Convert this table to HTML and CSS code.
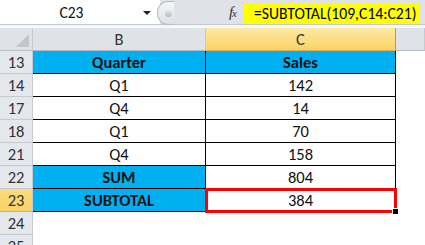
FILE: index.html
```html
<!DOCTYPE html>
<html lang="en">
<head>
    <meta charset="UTF-8">
    <meta name="viewport" content="width=device-width, initial-scale=1.0">
    <title>SUBTOTAL example</title>
    <link rel="stylesheet" href="styles.css">
</head>
<body>
    <div class="formula-bar">
        <div class="name-box">
            <span class="cell-ref">C23</span>
            <span class="drop"></span>
        </div>
        <div class="splitter"><span class="knob"></span></div>
        <div class="fx">f<span class="x">x</span></div>
        <div class="formula">=SUBTOTAL(109,C14:C21)</div>
    </div>

    <div class="grid">
        <div class="corner"><span class="tri"></span></div>
        <div class="col-head">B</div>
        <div class="col-head active">C</div>
        <div class="col-head"></div>

        <div class="row-head">13</div>
        <div class="cell blue bold">Quarter</div>
        <div class="cell blue bold">Sales</div>
        <div class="empty"></div>

        <div class="row-head">14</div>
        <div class="cell">Q1</div>
        <div class="cell">142</div>
        <div class="empty"></div>

        <div class="row-head">17</div>
        <div class="cell">Q4</div>
        <div class="cell">14</div>
        <div class="empty"></div>

        <div class="row-head">18</div>
        <div class="cell">Q1</div>
        <div class="cell">70</div>
        <div class="empty"></div>

        <div class="row-head">21</div>
        <div class="cell">Q4</div>
        <div class="cell">158</div>
        <div class="empty"></div>

        <div class="row-head">22</div>
        <div class="cell blue bold">SUM</div>
        <div class="cell">804</div>
        <div class="empty"></div>

        <div class="row-head active">23</div>
        <div class="cell blue bold">SUBTOTAL</div>
        <div class="cell selected">384</div>
        <div class="empty"></div>

        <div class="row-head">24</div>
        <div class="empty"></div>
        <div class="empty"></div>
        <div class="empty"></div>

        <div class="row-head">25</div>
        <div class="empty"></div>
        <div class="empty"></div>
        <div class="empty"></div>
    </div>
</body>
</html>
```

FILE: styles.css
```css
body {
    margin: 0;
    background-color: #ffffff;
    font-family: Carlito, Lato, "Liberation Sans", sans-serif;
    font-size: 16.5px;
    color: #111;
    width: 425px;
    height: 245px;
    overflow: hidden;
}

/* name box + formula input */
.formula-bar {
    display: flex;
    height: 24px;
    background-color: #dfe3e8;
    border-bottom: 1px solid #c3c8cf;
    box-shadow: 0 2px 0 #f4f5f7;
    margin-bottom: 3px;
}

.name-box {
    width: 160px;
    background-color: #ffffff;
    display: flex;
    align-items: center;
}

.cell-ref {
    width: 143px;
    text-align: center;
    font-size: 15.5px;
}

.drop {
    width: 0;
    height: 0;
    border-left: 4px solid transparent;
    border-right: 4px solid transparent;
    border-top: 4px solid #222;
    margin-top: 2px;
}

.splitter {
    width: 16px;
    height: 22px;
    margin-top: 1px;
    margin-left: -3px;
    border-radius: 11px 0 0 11px;
    border: 1px solid #b9bec5;
    border-right: none;
    background: linear-gradient(#f4f5f7, #dde1e6);
    display: flex;
    align-items: center;
    justify-content: center;
}

.knob {
    width: 7px;
    height: 7px;
    border-radius: 50%;
    background: linear-gradient(#e8eaed, #b4b9c0);
    margin-left: 4px;
}

.fx {
    width: 70px;
    text-align: right;
    padding-right: 7px;
    box-sizing: border-box;
    font-family: "Liberation Serif", serif;
    font-style: italic;
    font-size: 15px;
    line-height: 24px;
    color: #333;
}

.fx .x {
    font-size: 11px;
    margin-left: -1px;
}

.formula {
    width: 176px;
    margin-top: 4px;
    height: 20px;
    line-height: 20px;
    background-color: #ffff00;
    padding-left: 10px;
    box-sizing: border-box;
    white-space: nowrap;
    font-size: 15.7px;
    color: #000;
}

/* worksheet */
.grid {
    display: grid;
    grid-template-columns: 33px 173px 190px 29px;
    grid-auto-rows: 23px;
}

.grid > div {
    box-sizing: border-box;
    display: flex;
    align-items: center;
    justify-content: center;
}

.corner,
.col-head {
    background-color: #dfe3e8;
    border-right: 1px solid #c5cad1;
    border-bottom: 1px solid #b6bcc4;
    color: #333;
}

.corner {
    position: relative;
}

.corner .tri {
    position: absolute;
    right: 3px;
    bottom: 3px;
    width: 0;
    height: 0;
    border-left: 13px solid transparent;
    border-bottom: 13px solid #c3c7cd;
}

.col-head.active {
    background: linear-gradient(#fde9a4, #f9d366);
    border-right-color: #c29a4f;
    border-bottom-color: #e2b04c;
}

.row-head {
    background-color: #e4e7ec;
    border-right: 1px solid #c5cad1;
    border-bottom: 1px solid #c5cad1;
    color: #333;
}

.row-head.active {
    background: linear-gradient(#fbdc7c, #f9d366);
    border-bottom-color: #e2b04c;
}

.cell {
    border-right: 1px solid #000;
    border-bottom: 1px solid #000;
    position: relative;
}

.cell.blue {
    background-color: #00b0f0;
}

.cell.bold {
    font-weight: bold;
}

.cell.selected {
    outline: 3px solid #ff0000;
    outline-offset: -2px;
    z-index: 1;
}

/* fill handle */
.cell.selected::after {
    content: "";
    position: absolute;
    right: -3px;
    bottom: -3px;
    width: 5px;
    height: 5px;
    background-color: #000;
    border-left: 1px solid #fff;
    border-top: 1px solid #fff;
}

.empty {
    background-color: #ffffff;
}
```
